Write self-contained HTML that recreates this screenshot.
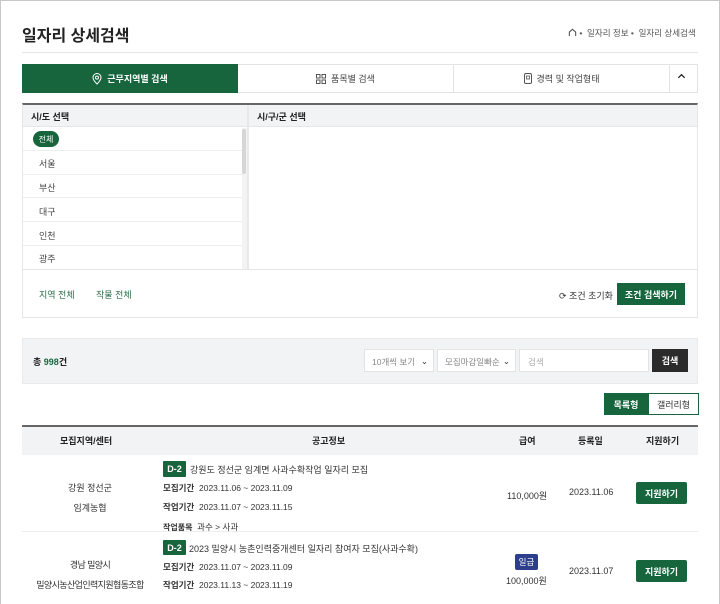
<!DOCTYPE html>
<html><head><meta charset="utf-8"><style>
*{box-sizing:border-box;margin:0;padding:0}
body{width:720px;height:604px;overflow:hidden;background:#fff;font-family:"Liberation Sans","Noto Sans CJK KR",sans-serif;color:#222;position:relative}
.frame{position:absolute;left:0;top:0;width:720px;height:604px;border:1px solid #c8c8c8;border-bottom:none}
.a{position:absolute}
.g{color:#17653d}
.btn{background:#17653d;color:#fff;font-weight:bold;display:flex;align-items:center;justify-content:center}
.d{position:absolute;left:163px;font-size:8.5px;color:#333;white-space:nowrap;line-height:11px}
</style></head><body>
<div class="frame"></div>
<div class="a" style="left:22px;top:22px;font-size:16px;font-weight:bold;color:#222">일자리 상세검색</div>
<div class="a" style="left:568px;top:27px;font-size:8.5px;color:#555;white-space:nowrap"><svg width="9" height="9" viewBox="0 0 10 10" style="vertical-align:-1px"><path d="M1.5 9V4.5L5 1.5 8.5 4.5V9" fill="none" stroke="#555" stroke-width="1.2"/></svg> • &nbsp;일자리 정보 • &nbsp;일자리 상세검색</div>
<div class="a" style="left:22px;top:52px;width:676px;height:1px;background:#e6e6e6"></div>

<div class="a" style="left:22px;top:64px;width:676px;height:29px;border:1px solid #e3e3e3"></div>
<div class="a btn" style="left:22px;top:64px;width:216px;height:29px;font-size:9px">
<svg width="10" height="12" viewBox="0 0 10 12" style="margin-right:5px"><path d="M5 11C2 8 1 6 1 4.5A4 4 0 0 1 9 4.5C9 6 8 8 5 11Z" fill="none" stroke="#fff" stroke-width="1"/><circle cx="5" cy="4.6" r="1.5" fill="none" stroke="#fff" stroke-width="1"/></svg>근무지역별 검색</div>
<div class="a" style="left:238px;top:64px;width:216px;height:29px;border-right:1px solid #e3e3e3;display:flex;align-items:center;justify-content:center;font-size:9px;color:#444">
<svg width="10" height="10" viewBox="0 0 10 10" style="margin-right:5px"><g fill="none" stroke="#555" stroke-width="1"><rect x=".5" y=".5" width="3.5" height="3.5"/><rect x="6" y=".5" width="3.5" height="3.5"/><rect x=".5" y="6" width="3.5" height="3.5"/><rect x="6" y="6" width="3.5" height="3.5"/></g></svg>품목별 검색</div>
<div class="a" style="left:454px;top:64px;width:216px;height:29px;border-right:1px solid #e3e3e3;display:flex;align-items:center;justify-content:center;font-size:9px;color:#444">
<svg width="8" height="12" viewBox="0 0 8 12" style="margin-right:5px"><rect x=".5" y=".5" width="7" height="10" rx="1.5" fill="none" stroke="#555"/><rect x="2.5" y="3" width="3" height="3" fill="none" stroke="#555" stroke-width=".8"/></svg>경력 및 작업형태</div>
<div class="a" style="left:677px;top:70px;font-size:12px;color:#333">
<svg width="9" height="9" viewBox="0 0 10 10"><path d="M1.5 6.5L5 3l3.5 3.5" fill="none" stroke="#222" stroke-width="1.4"/></svg></div>

<div class="a" style="left:22px;top:103px;width:676px;height:215px;border:1px solid #e6e6e6;border-top:2px solid #666"></div>
<div class="a" style="left:23px;top:105px;width:674px;height:22px;background:#f2f3f5;border-bottom:1px solid #e6e6e6"></div>
<div class="a" style="left:247px;top:105px;width:2px;height:164px;background:#e8e8e8"></div>
<div class="a" style="left:31px;top:110px;font-size:9px;font-weight:bold">시/도 선택</div>
<div class="a" style="left:257px;top:110px;font-size:9px;font-weight:bold">시/구/군 선택</div>
<div class="a" style="left:22px;top:269px;width:676px;height:1px;background:#e6e6e6"></div>
<div class="a" style="left:242px;top:128px;width:5px;height:141px;background:#f3f3f3"></div>
<div class="a" style="left:242px;top:129px;width:4px;height:45px;background:#d6d6d6;border-radius:2px"></div>
<div class="a btn" style="left:33px;top:131px;width:26px;height:16px;border-radius:8px;font-size:8px;font-weight:normal">전체</div>
<div class="a" style="left:23px;top:150px;width:219px;height:1px;background:#eee"></div>
<div class="a" style="left:23px;top:174px;width:219px;height:1px;background:#eee"></div>
<div class="a" style="left:23px;top:197px;width:219px;height:1px;background:#eee"></div>
<div class="a" style="left:23px;top:221px;width:219px;height:1px;background:#eee"></div>
<div class="a" style="left:23px;top:245px;width:219px;height:1px;background:#eee"></div>
<div class="a" style="left:39px;top:157px;font-size:9px;color:#444">서울</div>
<div class="a" style="left:39px;top:181px;font-size:9px;color:#444">부산</div>
<div class="a" style="left:39px;top:205px;font-size:9px;color:#444">대구</div>
<div class="a" style="left:39px;top:229px;font-size:9px;color:#444">인천</div>
<div class="a" style="left:39px;top:252px;font-size:9px;color:#444">광주</div>
<div class="a" style="left:39px;top:288px;font-size:9px;color:#2a6b48">지역 전체</div>
<div class="a" style="left:96px;top:288px;font-size:9px;color:#2a6b48">작물 전체</div>
<div class="a" style="left:559px;top:289px;font-size:9px;color:#333">⟳ 조건 초기화</div>
<div class="a btn" style="left:617px;top:283px;width:68px;height:22px;font-size:9px">조건 검색하기</div>

<div class="a" style="left:22px;top:338px;width:676px;height:46px;background:#f2f3f5;border:1px solid #eaeaea"></div>
<div class="a" style="left:33px;top:355px;font-size:9px;font-weight:bold">총 <span class="g">998</span>건</div>
<div class="a" style="left:364px;top:349px;width:70px;height:23px;background:#fff;border:1px solid #e3e3e3;font-size:8.5px;color:#888;padding:6px 0 0 7px">10개씩 보기 <span style="color:#333;position:absolute;right:5px">⌄</span></div>
<div class="a" style="left:437px;top:349px;width:79px;height:23px;background:#fff;border:1px solid #e3e3e3;font-size:8.5px;color:#888;padding:6px 0 0 7px">모집마감일빠순 <span style="color:#333;position:absolute;right:5px">⌄</span></div>
<div class="a" style="left:519px;top:349px;width:130px;height:23px;background:#fff;border:1px solid #e3e3e3;font-size:8.5px;color:#aaa;padding:6px 0 0 8px">검색</div>
<div class="a" style="left:652px;top:349px;width:36px;height:23px;background:#2b2b2b;color:#fff;font-size:9px;font-weight:bold;display:flex;align-items:center;justify-content:center">검색</div>

<div class="a btn" style="left:604px;top:393px;width:44px;height:22px;font-size:9px">목록형</div>
<div class="a" style="left:648px;top:393px;width:51px;height:22px;border:1px solid #17653d;font-size:9px;color:#333;display:flex;align-items:center;justify-content:center">갤러리형</div>

<div class="a" style="left:22px;top:425px;width:676px;height:30px;background:#f2f3f5;border-top:2px solid #666"></div>
<div class="a" style="top:434px;left:0;width:720px;font-size:9px;font-weight:bold">
<span class="a" style="left:60px">모집지역/센터</span><span class="a" style="left:312px">공고정보</span><span class="a" style="left:519px">급여</span><span class="a" style="left:578px">등록일</span><span class="a" style="left:646px">지원하기</span></div>
<div class="a" style="left:22px;top:531px;width:676px;height:1px;background:#eee"></div>

<div class="a" style="left:0;top:478px;width:180px;text-align:center;font-size:9px;color:#333;line-height:20px">강원 정선군<br>임계농협</div>
<div class="a btn" style="left:163px;top:461px;width:23px;height:16px;font-size:9px;border-radius:1px">D-2</div>
<div class="a" style="left:190px;top:463px;font-size:9px;color:#333">강원도 정선군 임계면 사과수확작업 일자리 모집</div>
<div class="d" style="top:483px"><b>모집기간</b>&nbsp; 2023.11.06 ~ 2023.11.09</div>
<div class="d" style="top:502px"><b>작업기간</b>&nbsp; 2023.11.07 ~ 2023.11.15</div>
<div class="d" style="top:522px"><b style="font-size:8px">작업품목</b>&nbsp; 과수 &gt; 사과</div>
<div class="a" style="left:507px;top:489px;font-size:9px;color:#333">110,000원</div>
<div class="a" style="left:569px;top:487px;font-size:9px;color:#333">2023.11.06</div>
<div class="a btn" style="left:636px;top:482px;width:51px;height:22px;font-size:9px;border-radius:2px">지원하기</div>

<div class="a" style="left:0;top:555px;width:180px;text-align:center;font-size:9px;color:#333;line-height:20px;white-space:nowrap;letter-spacing:-0.6px">경남 밀양시<br>밀양시농산업인력지원협동조합</div>
<div class="a btn" style="left:163px;top:540px;width:23px;height:15px;font-size:9px;border-radius:1px">D-2</div>
<div class="a" style="left:189px;top:542px;font-size:9px;color:#333">2023 밀양시 농촌인력중개센터 일자리 참여자 모집(사과수확)</div>
<div class="d" style="top:562px"><b>모집기간</b>&nbsp; 2023.11.07 ~ 2023.11.09</div>
<div class="d" style="top:580px"><b>작업기간</b>&nbsp; 2023.11.13 ~ 2023.11.19</div>
<div class="a" style="left:515px;top:554px;width:23px;height:16px;background:#2c3e8c;color:#fff;font-size:8.5px;border-radius:2px;display:flex;align-items:center;justify-content:center">일급</div>
<div class="a" style="left:506px;top:574px;font-size:9px;color:#333">100,000원</div>
<div class="a" style="left:569px;top:566px;font-size:9px;color:#333">2023.11.07</div>
<div class="a btn" style="left:636px;top:560px;width:51px;height:22px;font-size:9px;border-radius:2px">지원하기</div>
</body></html>
